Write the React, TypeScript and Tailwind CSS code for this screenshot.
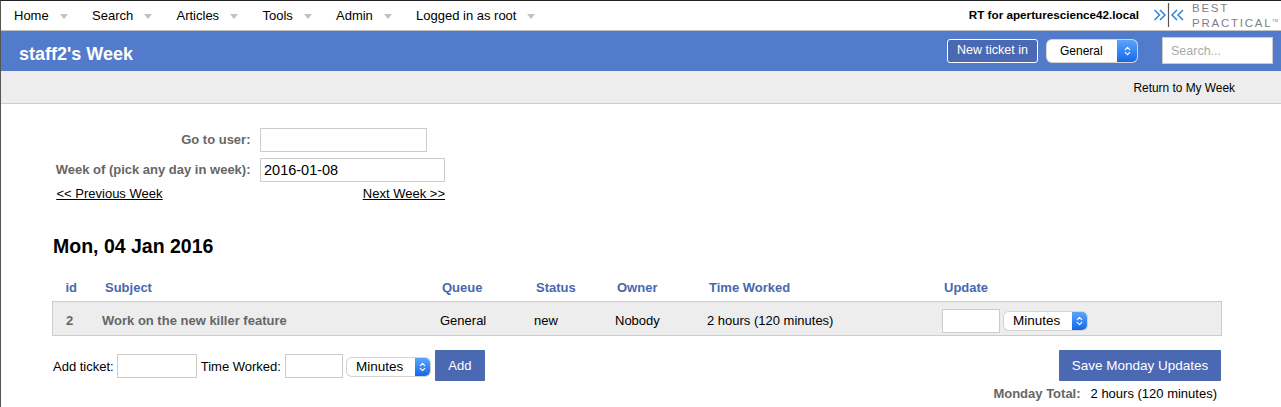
import { ChevronDown, ChevronUp } from "lucide-react";

const navItems = [
  { label: "Home", width: "w-[78px]" },
  { label: "Search", width: "w-[84.5px]" },
  { label: "Articles", width: "w-[86px]" },
  { label: "Tools", width: "w-[73.5px]" },
  { label: "Admin", width: "w-[80px]" },
  { label: "Logged in as root", width: "w-[150px]" },
];

const columns = "grid-cols-[52px_337px_94px_81px_92px_235px_1fr]";

const NativeSelect = ({ label, className }: { label: string; className: string }) => (
  <div className={`flex items-stretch rounded-[5px] bg-white shadow-[0_0_0_1px_#d4d4d4] overflow-hidden ${className}`}>
    <span className="flex-1 pl-[9px] text-[13.5px] leading-[18px] text-black">{label}</span>
    <span className="w-[15px] bg-gradient-to-b from-[#5aa5fb] to-[#1467e9] flex flex-col items-center justify-center text-white">
      <ChevronUp size={9} strokeWidth={3} className="-mb-[2px]" />
      <ChevronDown size={9} strokeWidth={3} className="-mt-[2px]" />
    </span>
  </div>
);

const App = () => {
  return (
    <div className="w-[1281px] h-[407px] overflow-hidden bg-white text-black border-l border-l-[#555] border-t border-t-[#222] font-['Liberation_Sans',Arial,sans-serif] text-[13px]">
      <div className="h-[29.5px] flex items-center justify-between border-b border-b-[#c4c4c4]">
        <div className="flex items-center pl-[13px]">
          {navItems.map((item) => (
            <div key={item.label} className={`flex items-center gap-[11px] ${item.width}`}>
              <span className="leading-[15px] whitespace-nowrap">{item.label}</span>
              <span className="mt-[3px] w-0 h-0 border-x-[4.5px] border-x-transparent border-t-[5px] border-t-[#c2c2c2]" />
            </div>
          ))}
        </div>
        <div className="flex items-center">
          <span className="font-bold text-[11.7px] mr-[14px]">RT for aperturescience42.local</span>
          <svg width="33" height="26" viewBox="0 0 33 26" fill="none">
            <path d="M1.5 8 6.5 13 1.5 18M7 8 12 13 7 18" stroke="#2f86d6" strokeWidth="1.5" />
            <path d="M15.5 1V25" stroke="#555" strokeWidth="1.2" />
            <path d="M24 8 19 13 24 18M30 8 25 13 30 18" stroke="#2f86d6" strokeWidth="1.5" />
          </svg>
          <div className="ml-[6px] mr-[5px] w-[84px] text-[#7f7f7f] text-[11.5px] tracking-[1.75px]">
            <div className="leading-[13px]">BEST</div>
            <div className="leading-[12px] whitespace-nowrap">PRACTICAL<span className="text-[4px] tracking-normal align-super">TM</span></div>
          </div>
        </div>
      </div>

      <div className="h-[40px] bg-[#537bcc] flex items-center justify-between pl-[18px] pr-[8px]">
        <h1 className="mt-[8px] font-bold text-[18px] text-white">staff2's Week</h1>
        <div className="flex items-center">
          <button className="w-[91px] h-[24px] rounded-[3px] border border-white bg-[#4b68b3] text-white text-[12.5px]">New ticket in</button>
          <NativeSelect label="General" className="ml-[9px] w-[90px] h-[22px] [&>span:first-child]:pl-[13px] [&>span:first-child]:leading-[22px] [&>span:first-child]:text-[12px] [&>span:last-child]:w-[20px]" />
          <input placeholder="Search..." className="ml-[25px] w-[111px] h-[27px] px-[8px] bg-white border border-[#ccc] text-[12.5px] placeholder:text-[#aaa] outline-none" />
        </div>
      </div>

      <div className="h-[33px] bg-[#ededed] border-b border-b-[#ccc] flex items-center justify-end pr-[46px] pt-[4px] text-[11.9px]">
        Return to My Week
      </div>

      <div className="pl-[51px] pr-[59px] pt-[21px]">
        <div className="pl-[3.5px] w-[393px]">
          <div className="flex items-center h-[30px]">
            <label className="w-[195px] text-right font-bold text-[#666] whitespace-nowrap">Go to user:</label>
            <input className="ml-[9.5px] w-[167px] h-[24px] border border-[#ccc] bg-white outline-none" />
          </div>
          <div className="flex items-center h-[30px]">
            <label className="w-[195px] text-right font-bold text-[#666] whitespace-nowrap">Week of (pick any day in week):</label>
            <input defaultValue="2016-01-08" className="ml-[9.5px] w-[185px] h-[24px] border border-[#ccc] bg-white px-[3px] text-[14.5px] outline-none" />
          </div>
          <div className="flex justify-between leading-[18px] underline">
            <a className="ml-[1px]">&lt;&lt; Previous Week</a>
            <a>Next Week &gt;&gt;</a>
          </div>
        </div>

        <h2 className="mt-[33px] ml-[1px] font-bold text-[19.5px] leading-[21px]">Mon, 04 Jan 2016</h2>

        <div className={`mt-[19px] grid ${columns} h-[25px] items-center font-bold text-[13px] text-[#4868ad] pl-[14px]`}>
          <span className="-ml-[0.5px] -mr-[14px]">id</span>
          <span className="-ml-[13px]">Subject</span>
          <span className="-ml-[13px]">Queue</span>
          <span className="-ml-[13px]">Status</span>
          <span className="-ml-[13px]">Owner</span>
          <span className="-ml-[13px]">Time Worked</span>
          <span className="-ml-[13px]">Update</span>
        </div>
        <div className={`grid ${columns} h-[35px] items-center bg-[#ededed] border border-[#ccc] pl-[13px] pt-[5px]`}>
          <span className="font-bold text-[#666]">2</span>
          <span className="-ml-[16px] font-bold text-[#666]">Work on the new killer feature</span>
          <span className="-ml-[15px]">General</span>
          <span className="-ml-[15px]">new</span>
          <span className="-ml-[15px]">Nobody</span>
          <span className="-ml-[15px]">2 hours (120 minutes)</span>
          <div className="-ml-[15px] flex items-center">
            <input className="w-[58px] h-[24px] border border-[#ccc] bg-white outline-none" />
            <NativeSelect label="Minutes" className="ml-[4px] w-[83px] h-[18px]" />
          </div>
        </div>

        <div className="mt-[14px] flex items-start justify-between">
          <div className="flex items-center h-[32px]">
            <span className="ml-[1px] pt-[2px]">Add ticket:</span>
            <input className="ml-[3px] w-[80px] h-[24px] border border-[#ccc] bg-white outline-none" />
            <span className="ml-[4px] pt-[2px]">Time Worked:</span>
            <input className="ml-[4px] w-[58px] h-[24px] border border-[#ccc] bg-white outline-none" />
            <NativeSelect label="Minutes" className="ml-[4px] mt-[2px] w-[83px] h-[18px]" />
            <button className="ml-[5px] w-[50px] h-[31px] bg-[#4b68b3] text-white text-[13px] rounded-[1px]">Add</button>
          </div>
          <button className="w-[162px] h-[31px] mr-[1px] pt-[2px] bg-[#4b68b3] text-white text-[13.5px] rounded-[1px]">Save Monday Updates</button>
        </div>
        <div className="mt-[4px] flex justify-end pr-[5px] leading-[16px]">
          <span className="font-bold text-[#666] mr-[10px]">Monday Total:</span>
          <span>2 hours (120 minutes)</span>
        </div>
      </div>
    </div>
  );
};

export default App;
